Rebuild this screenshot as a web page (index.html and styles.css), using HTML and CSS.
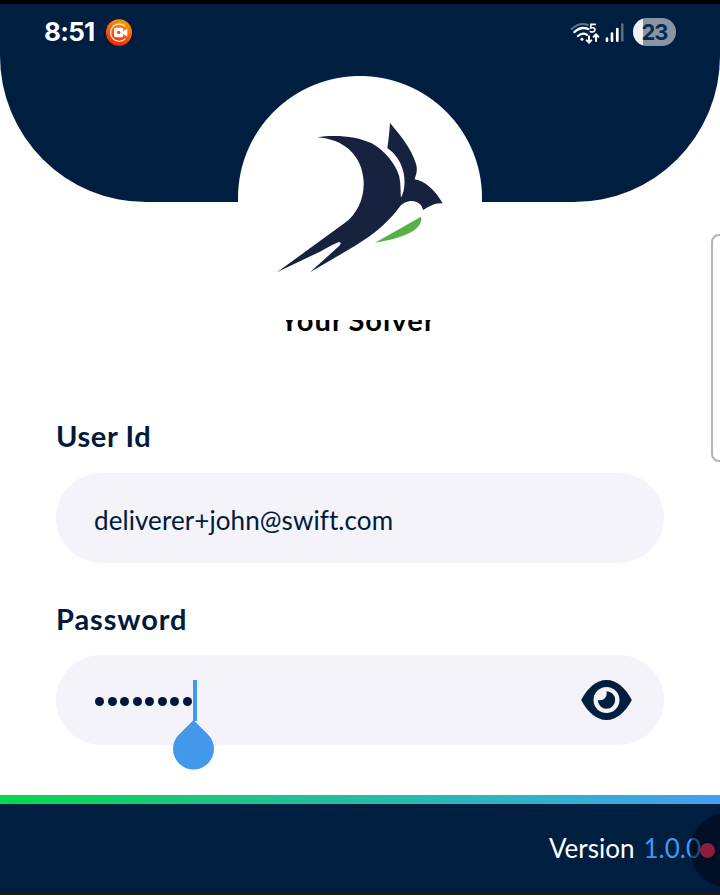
FILE: index.html
```html
<!DOCTYPE html>
<html lang="en">
<head>
<meta charset="utf-8">
<title>Your Solver</title>
<link rel="stylesheet" href="styles.css">
</head>
<body>
<div class="screen">
  <header class="hero">
    <div class="status">
      <span class="clock">8:51</span>
      <svg class="rec" viewBox="0 0 78 80">
        <defs><linearGradient id="rec" x1=".7" y1="0" x2=".35" y2="1"><stop offset="0" stop-color="#f5a000"/><stop offset=".5" stop-color="#f9620a"/><stop offset="1" stop-color="#ee2306"/></linearGradient></defs>
        <ellipse cx="39" cy="40" rx="39" ry="40" fill="url(#rec)"/>
        <path d="M58 22A26 26 0 1 0 58 59" fill="none" stroke="#ffe3cf" stroke-width="4"/>
        <rect x="24" y="26" width="28" height="28" rx="6" fill="#fff"/>
        <path d="M50 38L64 28V53L50 43z" fill="#fff"/>
        <circle cx="38" cy="40" r="5" fill="#e9501b"/>
      </svg>
      <span class="grow"></span>
      <svg class="signals" viewBox="0 0 160 62" fill="none" stroke="#fff" stroke-width="7" stroke-linecap="round">
        <path d="M2 18Q26-3 51 6" stroke="#60758d" stroke-width="6"/>
        <path d="M10 27Q30 9 52 18M21 39Q34 27 48 35"/>
        <circle cx="33" cy="49" r="4.5" fill="#fff" stroke="none"/>
        <path d="M73 4H60L59 15Q72 12 72 20Q71 29 58 26" stroke-width="5"/>
        <path d="M54 40V58M47 52L54 59L61 52M75 54V34M68 41L75 34L82 41" stroke-width="6"/>
        <path d="M108 47V53M123 32V53M139 18V53" stroke-width="8"/>
        <path d="M154 4V53" stroke="#60758d" stroke-width="7"/>
      </svg>
      <span class="battery">23</span>
    </div>
  </header>

  <div class="brand">
    <svg class="bird" viewBox="0 0 750 630">
      <path fill="#16223e" d="M246 202C300 193 367 199 410 220C450 242 482 282 493 320C498 343 496 365 498 383C509 365 511 333 506 309C499 275 480 250 457 234C461 209 463 186 465 159C497 196 528 235 543 281C549 302 543 314 539 328C570 333 600 360 623 400C601 397 582 409 565 420C560 411 562 406 549 398C531 388 506 394 493 412C466 450 423 489 363 526L225 607L309 531C317 523 322 516 310 517C292 524 275 535 255 545L127 606L329 459C369 430 388 382 386 335C382 254 325 207 246 202Z"/>
      <path fill="#55b045" d="M420 518L558 440C563 458 548 478 515 493C486 506 451 513 420 518Z"/>
    </svg>
  </div>
  <h1 class="title">Your Solver</h1>

  <form class="form">
    <label class="label user">User Id</label>
    <div class="field"><span class="email">deliverer+john@swift.com</span></div>
    <label class="label pass">Password</label>
    <div class="field">
      <span class="dots"><i></i><i></i><i></i><i></i><i></i><i></i><i></i><i></i></span>
      <span class="caret"><svg class="handle" viewBox="0 0 41 50"><path fill="#4299ec" d="M20.500 0L35 14.500A20.500 20.500 0 1 1 6 14.500Z"/></svg></span>
      <svg class="eye" viewBox="0 0 152 120">
        <path fill="#001e40" d="M0 60C19 24 45 0 76 0S133 24 152 60C133 96 107 120 76 120S19 96 0 60Z"/>
        <circle cx="76" cy="60" r="39" fill="#f4f3fa"/>
        <path fill="#001e40" d="M76 34A26 26 0 1 1 50 60Q59 63 69 57Q79 48 76 34Z"/>
      </svg>
    </div>
  </form>

  <footer class="footer">
    <span class="word">Version</span><span class="number">1.0.0</span>
    <span class="bubble"><i></i></span>
  </footer>
  <div class="edge"></div>
</div>
</body>
</html>
```
FILE: styles.css
```css
* { box-sizing: border-box; }
body { margin: 0; background: #fff; font-family: Lato, "Liberation Sans", sans-serif; color: #001a3b; }
.screen { position: relative; width: 720px; height: 895px; overflow: hidden; display: flex; flex-direction: column; border-top: 4px solid #000; border-bottom: 3px solid #1a1a1a; }
.hero { flex: none; height: 198px; background: #001e40; border-radius: 0 0 146px 146px; }
.status { display: flex; align-items: center; height: 56px; padding: 0 44px; color: #fff; }
.clock { width: 62px; font: 700 26px/30px Inter, sans-serif; letter-spacing: -.7px; }
.rec { width: 26px; height: 27px; }
.grow { flex: 1; }
.signals { width: 53.300px; height: 20.700px; margin: 2px 9px 0 0; overflow: visible; }
.battery { width: 43px; height: 28px; border-radius: 14px; background: linear-gradient(90deg, #eef0f4 10px, #8796a7 10px); color: #0c2a4b; font: 700 22px/28px Inter, sans-serif; letter-spacing: -1px; text-align: center; }
.brand { position: relative; z-index: 1; flex: none; align-self: center; width: 244px; height: 244px; margin-top: -126px; background: radial-gradient(circle at 50% 50%, #fff 121.500px, transparent 122.500px) top / 100% 244px; display: flex; justify-content: center; }
.brand::after { content: ""; position: absolute; inset: 126px 0 0; z-index: -1; background: #fff; }
.bird { flex: none; width: 250px; height: 210px; margin-top: -6px; }
.title { flex: none; margin: -20px 0 0; padding-right: 4px; height: 40px; font-size: 29px; line-height: 39px; font-weight: 700; letter-spacing: 1.100px; word-spacing: -3px; text-align: center; color: #000; }
.form { display: flex; flex-direction: column; padding: 0 56px; }
.label { height: 40px; line-height: 40px; font-size: 29px; font-weight: 700; }
.user { margin-top: 76px; margin-bottom: 17px; letter-spacing: .600px; }
.pass { margin-top: 36px; margin-bottom: 17px; letter-spacing: .900px; }
.field { height: 90px; border-radius: 45px; background: #f4f3fa; padding: 0 32px 0 38px; display: flex; align-items: center; }
.pass + .field { margin-top: -1px; }
.email { font-size: 26px; line-height: 34px; margin-top: 3px; letter-spacing: .080px; }
.dots { display: flex; gap: 3.500px; padding-left: 1px; margin-top: 2px; }
.dots i { width: 9px; height: 9px; border-radius: 50%; background: #001538; }
.caret { position: relative; width: 4px; height: 41px; margin-left: 1px; background: #4299ec; }
.handle { position: absolute; left: -20px; top: 40px; width: 41px; height: 50px; }
.eye { width: 51px; height: 40px; margin-left: auto; }
.footer { position: relative; flex: none; height: 97px; margin-top: auto; padding: 9px 19px 0 0; display: flex; justify-content: flex-end; align-items: center; background: linear-gradient(90deg, #05d94b, #1fc28c 35%, #2eb3c6 72%, #429fee) top / 100% 9px no-repeat #001e40; color: #fff; font-size: 26px; line-height: 34px; }
.number { margin-left: 9px; color: #4299e8; }
.bubble { position: absolute; left: 690px; top: 18px; width: 74px; height: 74px; border-radius: 50%; background: rgba(0, 0, 15, .52); }
.bubble i { position: absolute; left: 10px; top: 30px; width: 15px; height: 15px; border-radius: 50%; background: #8f1d40; }
.edge { position: absolute; left: 711px; top: 230px; width: 20px; height: 228px; border: 2px solid #b4b4b4; border-radius: 8px; }
```
